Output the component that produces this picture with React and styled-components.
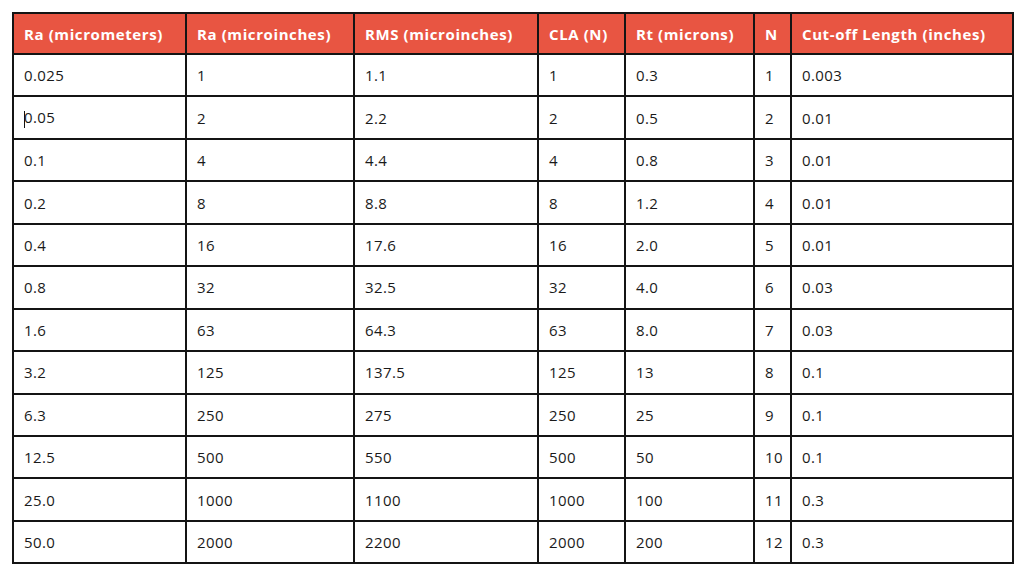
import styled, { createGlobalStyle } from "styled-components"

const GlobalStyle = createGlobalStyle`
body {
  margin: 0;
  background: #ffffff;
  font-family: "Open Sans", "Noto Sans", sans-serif;
}
`

const Page = styled.div`
padding: 12px 0 0 12px;
`

const Table = styled.table`
border-collapse: collapse;
table-layout: fixed;
width: 1000px;
color: #1a1a1a;
font-size: 15px;
`

const HeadCell = styled.th`
background-color: #e85542;
color: #ffffff;
font-weight: 700;
text-align: left;
padding: 0 10px;
height: 39px;
border: 2px solid #141414;
white-space: nowrap;
letter-spacing: 0.6px;
`

const Cell = styled.td`
padding: 0 10px;
height: 40.45px;
border: 2px solid #141414;
white-space: nowrap;
letter-spacing: 0.4px;
`

const Caret = styled.span`
display: inline-block;
width: 1px;
height: 17px;
background: #111;
vertical-align: middle;
margin-right: -1px;
`

const columns = [
  { title: "Ra (micrometers)", width: 173 },
  { title: "Ra (microinches)", width: 168 },
  { title: "RMS (microinches)", width: 184 },
  { title: "CLA (N)", width: 87 },
  { title: "Rt (microns)", width: 129 },
  { title: "N", width: 37 },
  { title: "Cut-off Length (inches)", width: 222 },
]

const rows = [
  ["0.025", "1", "1.1", "1", "0.3", "1", "0.003"],
  ["0.05", "2", "2.2", "2", "0.5", "2", "0.01"],
  ["0.1", "4", "4.4", "4", "0.8", "3", "0.01"],
  ["0.2", "8", "8.8", "8", "1.2", "4", "0.01"],
  ["0.4", "16", "17.6", "16", "2.0", "5", "0.01"],
  ["0.8", "32", "32.5", "32", "4.0", "6", "0.03"],
  ["1.6", "63", "64.3", "63", "8.0", "7", "0.03"],
  ["3.2", "125", "137.5", "125", "13", "8", "0.1"],
  ["6.3", "250", "275", "250", "25", "9", "0.1"],
  ["12.5", "500", "550", "500", "50", "10", "0.1"],
  ["25.0", "1000", "1100", "1000", "100", "11", "0.3"],
  ["50.0", "2000", "2200", "2000", "200", "12", "0.3"],
]

export default function App() {
  return (
    <>
      <GlobalStyle />
      <Page>
        <Table>
          <colgroup>
            {columns.map(c => <col key={c.title} style={{ width: c.width }} />)}
          </colgroup>
          <thead>
            <tr>
              {columns.map(c => <HeadCell key={c.title}>{c.title}</HeadCell>)}
            </tr>
          </thead>
          <tbody>
            {rows.map((r, i) => (
              <tr key={i}>
                {r.map((v, j) => (
                  <Cell key={j}>
                    {i === 1 && j === 0 && <Caret />}
                    {v}
                  </Cell>
                ))}
              </tr>
            ))}
          </tbody>
        </Table>
      </Page>
    </>
  )
}
